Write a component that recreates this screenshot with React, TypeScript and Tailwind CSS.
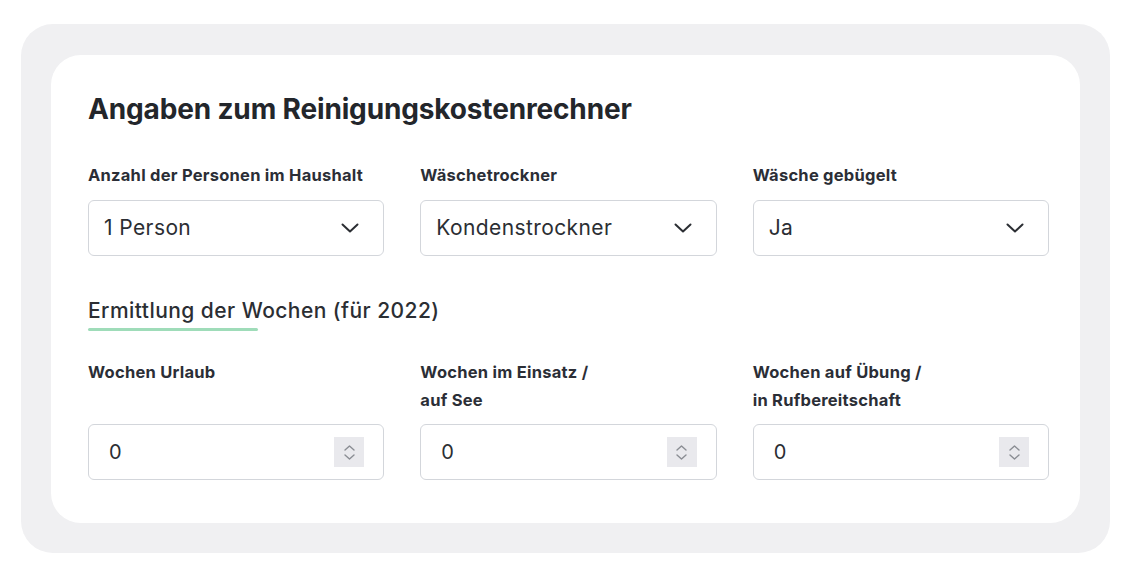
import React from "react";

const font = { fontFamily: "Inter, 'Noto Sans', sans-serif" };

function Chevron() {
  return (
    <svg width="18" height="10" viewBox="0 0 18 10" fill="none">
      <path d="M1.5 1.5 L9 8.5 L16.5 1.5" stroke="#2b2e33" strokeWidth="2" strokeLinecap="round" strokeLinejoin="round" />
    </svg>
  );
}

function Select({ value }: { value: string }) {
  return (
    <div className="flex h-[56px] items-center justify-between rounded-[6px] border-[1.5px] border-[#d3d6db] bg-white pl-[15px] pr-[24px]">
      <span className="text-[21px] font-normal tracking-[0.4px] text-[#2b2e33]">{value}</span>
      <Chevron />
    </div>
  );
}

function Spinner() {
  return (
    <div className="flex h-[30px] w-[30px] flex-col items-center justify-center gap-[3px] bg-[#e9e9ed]">
      <svg width="11" height="6" viewBox="0 0 11 6" fill="none">
        <path d="M1 5 L5.5 1 L10 5" stroke="#8a8d93" strokeWidth="1.4" strokeLinecap="round" strokeLinejoin="round" />
      </svg>
      <svg width="11" height="6" viewBox="0 0 11 6" fill="none">
        <path d="M1 1 L5.5 5 L10 1" stroke="#8a8d93" strokeWidth="1.4" strokeLinecap="round" strokeLinejoin="round" />
      </svg>
    </div>
  );
}

function NumberInput() {
  return (
    <div className="flex h-[56px] items-center justify-between rounded-[6px] border-[1.5px] border-[#d3d6db] bg-white pl-[20px] pr-[19px]">
      <span className="text-[20px] font-normal text-[#2b2e33]">0</span>
      <Spinner />
    </div>
  );
}

function Label({ children }: { children: React.ReactNode }) {
  return (
    <div className="text-[16.5px] font-bold leading-[28px] tracking-[0.25px] text-[#2b2e36]">{children}</div>
  );
}

export default function App() {
  return (
    <div className="min-h-[570px] w-[1128px] bg-white pl-[21px] pt-[24px]" style={font}>
      <div className="w-[1089px] rounded-[32px] bg-[#f0f0f2] px-[30px] pb-[30px] pt-[31px]">
        <div className="rounded-[30px] bg-white pb-[43px] pl-[37px] pr-[31px] pt-[36px]">
          <h1 className="text-[28px] font-bold leading-[36px] tracking-[-0.15px] text-[#23262b]">
            Angaben zum Reinigungskostenrechner
          </h1>
          <div className="mt-[34px] grid grid-cols-3 gap-x-[36px]">
            <div className="flex flex-col gap-[11px]">
              <Label>Anzahl der Personen im Haushalt</Label>
              <Select value="1 Person" />
            </div>
            <div className="flex flex-col gap-[11px]">
              <Label>Wäschetrockner</Label>
              <Select value="Kondenstrockner" />
            </div>
            <div className="flex flex-col gap-[11px]">
              <Label>Wäsche gebügelt</Label>
              <Select value="Ja" />
            </div>
          </div>
          <div className="mt-[41px] inline-block">
            <h2 className="text-[21px] font-medium leading-[28px] tracking-[0.45px] text-[#2b2e33]">
              Ermittlung der Wochen (für 2022)
            </h2>
            <div className="mt-[3px] h-[3px] w-[170px] rounded-full bg-[#9fdcb9]" />
          </div>
          <div className="mt-[27px] grid grid-cols-3 gap-x-[36px]">
            <div className="flex flex-col">
              <Label>
                Wochen Urlaub
                <br />
                &nbsp;
              </Label>
              <div className="mt-[10px]">
                <NumberInput />
              </div>
            </div>
            <div className="flex flex-col">
              <Label>
                Wochen im Einsatz /
                <br />
                auf See
              </Label>
              <div className="mt-[10px]">
                <NumberInput />
              </div>
            </div>
            <div className="flex flex-col">
              <Label>
                Wochen auf Übung /
                <br />
                in Rufbereitschaft
              </Label>
              <div className="mt-[10px]">
                <NumberInput />
              </div>
            </div>
          </div>
        </div>
      </div>
    </div>
  );
}
